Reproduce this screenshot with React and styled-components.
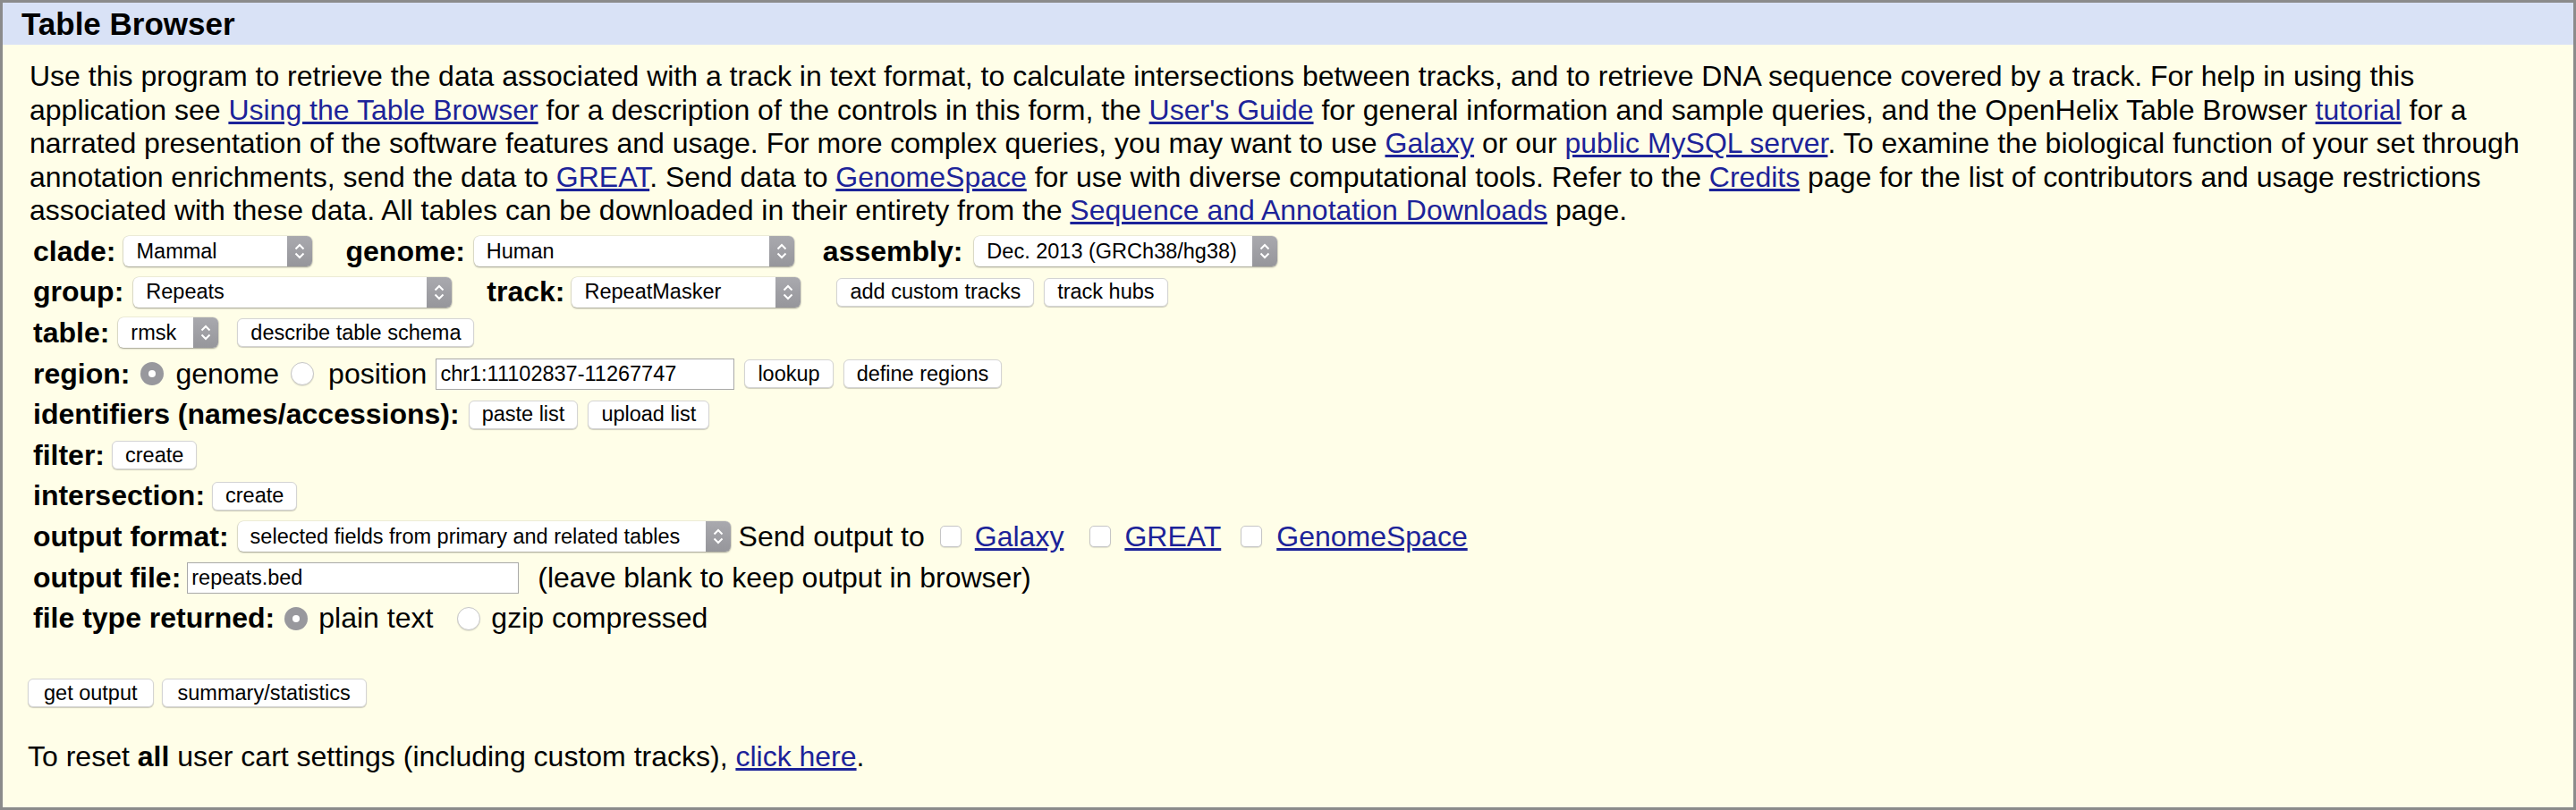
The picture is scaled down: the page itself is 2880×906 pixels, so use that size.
import styled, { createGlobalStyle } from "styled-components";

const GlobalStyle = createGlobalStyle`
  html, body {
    margin: 0;
    padding: 0;
    background: #fffee8;
  }
  body {
    font-family: "Liberation Sans", Arial, sans-serif;
    color: #000;
  }
`;

const Frame = styled.div`
  box-sizing: border-box;
  width: 100%;
  height: 906px;
  border: 3px solid #8b8b8b;
  background: #fffee8;
`;

const TitleBar = styled.div`
  height: 47px;
  background: #d9e2f6;
  display: flex;
  align-items: center;
  padding-left: 21px;
  font-size: 35px;
  font-weight: bold;
`;

const Body = styled.div`
  padding: 17px 10px 0 30px;
`;

const Intro = styled.p`
  margin: 0;
  font-size: 32px;
  line-height: 37.5px;
  white-space: nowrap;
`;

const Link = styled.a`
  color: #1c2399;
  text-decoration: underline;
  margin-left: ${(p) => p.$ml || 0}px;
`;

const Form = styled.div`
  display: flex;
  flex-direction: column;
  margin-top: 4px;
  padding-left: 4px;
  font-size: 32px;
`;

const Row = styled.div`
  display: flex;
  align-items: center;
  height: ${(p) => p.$h || 45.6}px;
`;

const Label = styled.span`
  font-weight: bold;
  white-space: nowrap;
  margin-left: ${(p) => p.$ml || 0}px;
`;

const Text = styled.span`
  white-space: nowrap;
  margin-left: ${(p) => p.$ml || 0}px;
`;

const SelectBox = styled.div`
  box-sizing: border-box;
  width: ${(p) => p.$w}px;
  height: 34px;
  margin-left: ${(p) => p.$ml || 0}px;
  display: flex;
  align-items: stretch;
  flex-shrink: 0;
  background: #fff;
  border-radius: 6px;
  box-shadow: 0 1px 2px rgba(0, 0, 0, 0.35), 0 0 0 0.5px rgba(0, 0, 0, 0.12);
  overflow: hidden;
`;

const SelectValue = styled.span`
  flex: 1;
  display: flex;
  align-items: center;
  padding-left: 14px;
  font-size: 23.5px;
  white-space: nowrap;
  overflow: hidden;
`;

const SelectArrow = styled.span`
  width: 28px;
  display: flex;
  align-items: center;
  justify-content: center;
  background: linear-gradient(#a9a9ae, #96969b);
`;

const Button = styled.button`
  box-sizing: border-box;
  height: 32px;
  padding: 0 ${(p) => p.$pad || 14}px;
  margin: 0 0 0 ${(p) => p.$ml || 0}px;
  flex-shrink: 0;
  background: #fff;
  border: 1px solid #d4d4d4;
  border-radius: 6px;
  box-shadow: 0 1px 1px rgba(0, 0, 0, 0.2);
  font-family: "Liberation Sans", Arial, sans-serif;
  font-size: 23.5px;
  color: #000;
  white-space: nowrap;
`;

const TextInput = styled.input`
  box-sizing: border-box;
  width: ${(p) => p.$w}px;
  height: 35px;
  padding: 0 4px;
  margin: 0 0 0 ${(p) => p.$ml || 0}px;
  flex-shrink: 0;
  border: 1px solid #a9a9a9;
  background: #fff;
  font-family: "Liberation Sans", Arial, sans-serif;
  font-size: 23.5px;
  color: #000;
`;

const Radio = styled.span`
  box-sizing: border-box;
  width: 26px;
  height: 26px;
  border-radius: 50%;
  display: inline-flex;
  align-items: center;
  justify-content: center;
  flex-shrink: 0;
  margin-left: ${(p) => p.$ml || 0}px;
  background: ${(p) => (p.$on ? "#98989d" : "#fff")};
  border: ${(p) => (p.$on ? "none" : "1px solid #c6c6c6")};
  box-shadow: ${(p) => (p.$on ? "none" : "0 1px 1px rgba(0,0,0,0.12)")};

  &::after {
    content: "";
    display: ${(p) => (p.$on ? "block" : "none")};
    width: 8px;
    height: 8px;
    border-radius: 50%;
    background: #fff;
  }
`;

const Check = styled.span`
  box-sizing: border-box;
  width: 24px;
  height: 24px;
  border-radius: 5px;
  border: 1px solid #c6c6c6;
  background: #fff;
  box-shadow: 0 1px 1px rgba(0, 0, 0, 0.12);
  flex-shrink: 0;
  margin-left: ${(p) => p.$ml || 0}px;
`;

const Actions = styled.div`
  display: flex;
  margin: 45px 0 0 -2px;
`;

const Footer = styled.p`
  margin: 37px 0 0 -2px;
  font-size: 32px;
  line-height: 37.5px;
`;

function Chevrons() {
  return (
    <svg width="14" height="22" viewBox="0 0 14 22">
      <path d="M2.5 8.5 L7 4 L11.5 8.5" fill="none" stroke="#fff" strokeWidth="2" />
      <path d="M2.5 13.5 L7 18 L11.5 13.5" fill="none" stroke="#fff" strokeWidth="2" />
    </svg>
  );
}

function Select({ w, ml, value }) {
  return (
    <SelectBox $w={w} $ml={ml}>
      <SelectValue>{value}</SelectValue>
      <SelectArrow>
        <Chevrons />
      </SelectArrow>
    </SelectBox>
  );
}

export default function App() {
  return (
    <>
      <GlobalStyle />
      <Frame>
        <TitleBar>Table Browser</TitleBar>
        <Body>
          <Intro>
            Use this program to retrieve the data associated with a track in text format, to calculate intersections
            between tracks, and to retrieve DNA sequence covered by a track. For help in using this
            <br />
            application see <Link>Using the Table Browser</Link> for a description of the controls in this form, the{" "}
            <Link>User's Guide</Link> for general information and sample queries, and the OpenHelix Table Browser{" "}
            <Link>tutorial</Link> for a
            <br />
            narrated presentation of the software features and usage. For more complex queries, you may want to use{" "}
            <Link>Galaxy</Link> or our <Link>public MySQL server</Link>. To examine the biological function of your set
            through
            <br />
            annotation enrichments, send the data to <Link>GREAT</Link>. Send data to <Link>GenomeSpace</Link> for use
            with diverse computational tools. Refer to the <Link>Credits</Link> page for the list of contributors and
            usage restrictions
            <br />
            associated with these data. All tables can be downloaded in their entirety from the{" "}
            <Link>Sequence and Annotation Downloads</Link> page.
          </Intro>

          <Form>
            <Row>
              <Label>clade:</Label>
              <Select ml={9} w={211} value="Mammal" />
              <Label $ml={37}>genome:</Label>
              <Select ml={10} w={358} value="Human" />
              <Label $ml={32}>assembly:</Label>
              <Select ml={13} w={339} value="Dec. 2013 (GRCh38/hg38)" />
            </Row>
            <Row>
              <Label>group:</Label>
              <Select ml={11} w={356} value="Repeats" />
              <Label $ml={39}>track:</Label>
              <Select ml={8} w={256} value="RepeatMasker" />
              <Button $ml={40}>add custom tracks</Button>
              <Button $ml={11}>track hubs</Button>
            </Row>
            <Row>
              <Label>table:</Label>
              <Select ml={10} w={112} value="rmsk" />
              <Button $ml={21}>describe table schema</Button>
            </Row>
            <Row>
              <Label>region:</Label>
              <Radio $on $ml={12} />
              <Text $ml={13}>genome</Text>
              <Radio $ml={13} />
              <Text $ml={16}>position</Text>
              <TextInput $ml={10} $w={334} defaultValue="chr1:11102837-11267747" />
              <Button $ml={11}>lookup</Button>
              <Button $ml={11}>define regions</Button>
            </Row>
            <Row>
              <Label>identifiers (names/accessions):</Label>
              <Button $ml={10}>paste list</Button>
              <Button $ml={11}>upload list</Button>
            </Row>
            <Row>
              <Label>filter:</Label>
              <Button $ml={8}>create</Button>
            </Row>
            <Row>
              <Label>intersection:</Label>
              <Button $ml={8}>create</Button>
            </Row>
            <Row>
              <Label>output format:</Label>
              <Select ml={10} w={551} value="selected fields from primary and related tables" />
              <Text $ml={9}>Send output to</Text>
              <Check $ml={17} />
              <Link $ml={15}>Galaxy</Link>
              <Check $ml={29} />
              <Link $ml={15}>GREAT</Link>
              <Check $ml={22} />
              <Link $ml={16}>GenomeSpace</Link>
            </Row>
            <Row>
              <Label>output file:</Label>
              <TextInput $ml={7} $w={371} defaultValue="repeats.bed" />
              <Text $ml={21}>(leave blank to keep output in browser)</Text>
            </Row>
            <Row>
              <Label>file type returned:</Label>
              <Radio $on $ml={11} />
              <Text $ml={12}>plain text</Text>
              <Radio $ml={27} />
              <Text $ml={12}>gzip compressed</Text>
            </Row>
          </Form>

          <Actions>
            <Button $pad={17}>get output</Button>
            <Button $pad={17} $ml={9}>
              summary/statistics
            </Button>
          </Actions>

          <Footer>
            To reset <b>all</b> user cart settings (including custom tracks), <Link>click here</Link>.
          </Footer>
        </Body>
      </Frame>
    </>
  );
}
